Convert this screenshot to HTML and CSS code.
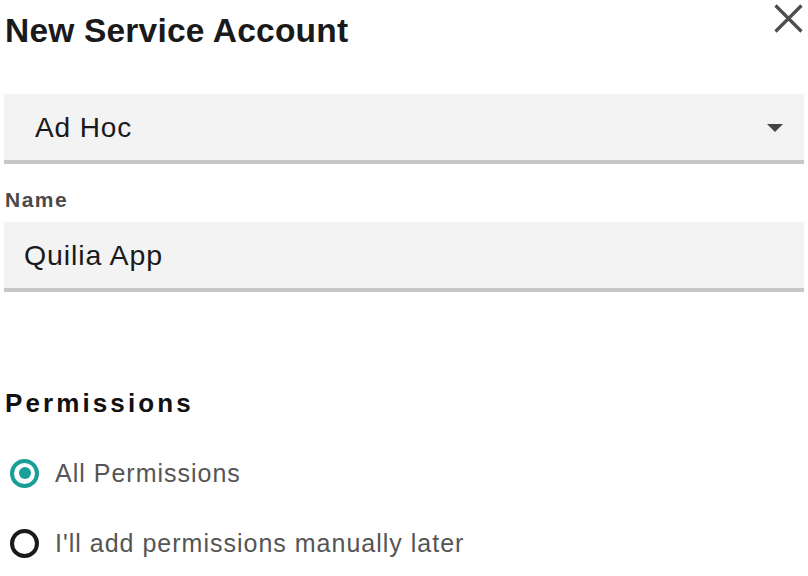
FILE: index.html
```html
<!DOCTYPE html>
<html lang="en">
<head>
<meta charset="utf-8">
<title>New Service Account</title>
<link rel="stylesheet" href="styles.css">
</head>
<body>
<div class="page">
  <div class="header">
    <h1 class="title">New Service Account</h1>
    <button class="close" aria-label="Close">
      <svg width="29" height="29" viewBox="0 0 29 29"><path d="M1.5 1.5 L27.5 27.5 M27.5 1.5 L1.5 27.5" stroke="#4d4d4d" stroke-width="3.2" fill="none"/></svg>
    </button>
  </div>
  <div class="select">
    <span class="select-value">Ad Hoc</span>
    <span class="caret"></span>
  </div>
  <label class="field-label">Name</label>
  <div class="input">Quilia App</div>
  <h2 class="section-title">Permissions</h2>
  <div class="radios">
    <div class="radio-row">
      <span class="radio checked"></span>
      <span class="radio-label">All Permissions</span>
    </div>
    <div class="radio-row">
      <span class="radio"></span>
      <span class="radio-label">I'll add permissions manually later</span>
    </div>
  </div>
</div>
</body>
</html>
```

FILE: styles.css
```css
html, body {
  margin: 0;
  padding: 0;
  background: #ffffff;
}
body {
  font-family: "Liberation Sans", Arial, sans-serif;
  color: #1a1a1a;
}
.page {
  padding: 0 4px;
}
.header {
  display: flex;
  justify-content: space-between;
  align-items: flex-start;
  height: 94px;
}
.title {
  margin: 11px 0 0 1px;
  font-size: 33.5px;
  line-height: 40px;
  font-weight: 700;
  letter-spacing: 0.2px;
  color: #1a1a1a;
}
.close {
  margin: 4px 1px 0 0;
  padding: 0;
  border: 0;
  background: none;
  width: 29px;
  height: 29px;
  display: block;
}
.close svg { display: block; }
.select {
  height: 66px;
  background: #f3f3f3;
  border-bottom: 4px solid #c6c6c6;
  display: flex;
  align-items: center;
  justify-content: space-between;
  padding: 0 21px 0 31px;
}
.select-value {
  font-size: 28px;
  line-height: 66px;
  letter-spacing: 0.9px;
  color: #1a1a1a;
  padding-top: 1px;
}
.caret {
  width: 0;
  height: 0;
  border-left: 8.5px solid transparent;
  border-right: 8.5px solid transparent;
  border-top: 8px solid #444444;
  margin-top: 2px;
}
.field-label {
  display: block;
  margin: 24px 0 10px 1px;
  font-size: 21px;
  line-height: 24px;
  font-weight: 700;
  letter-spacing: 1.5px;
  color: #4a4a4a;
}
.input {
  height: 66px;
  line-height: 66px;
  background: #f3f3f3;
  border-bottom: 4px solid #c6c6c6;
  padding: 0 20px;
  font-size: 28.5px;
  letter-spacing: 0.9px;
  color: #1a1a1a;
}
.section-title {
  margin: 96px 0 0 1px;
  font-size: 26px;
  line-height: 30px;
  font-weight: 700;
  letter-spacing: 3.1px;
  color: #111111;
}
.radios {
  margin-top: 35px;
  display: flex;
  flex-direction: column;
  gap: 30px;
}
.radio-row {
  display: flex;
  align-items: center;
  height: 40px;
}
.radio {
  box-sizing: border-box;
  width: 29px;
  height: 29px;
  border: 4px solid #1a1a1a;
  border-radius: 50%;
  margin-left: 6px;
  display: flex;
  align-items: center;
  justify-content: center;
}
.radio.checked {
  border-color: #199e98;
}
.radio.checked::after {
  content: "";
  width: 12px;
  height: 12px;
  border-radius: 50%;
  background: #199e98;
}
.radio-label {
  margin-left: 16px;
  font-size: 25px;
  letter-spacing: 1px;
  color: #555555;
}
```
